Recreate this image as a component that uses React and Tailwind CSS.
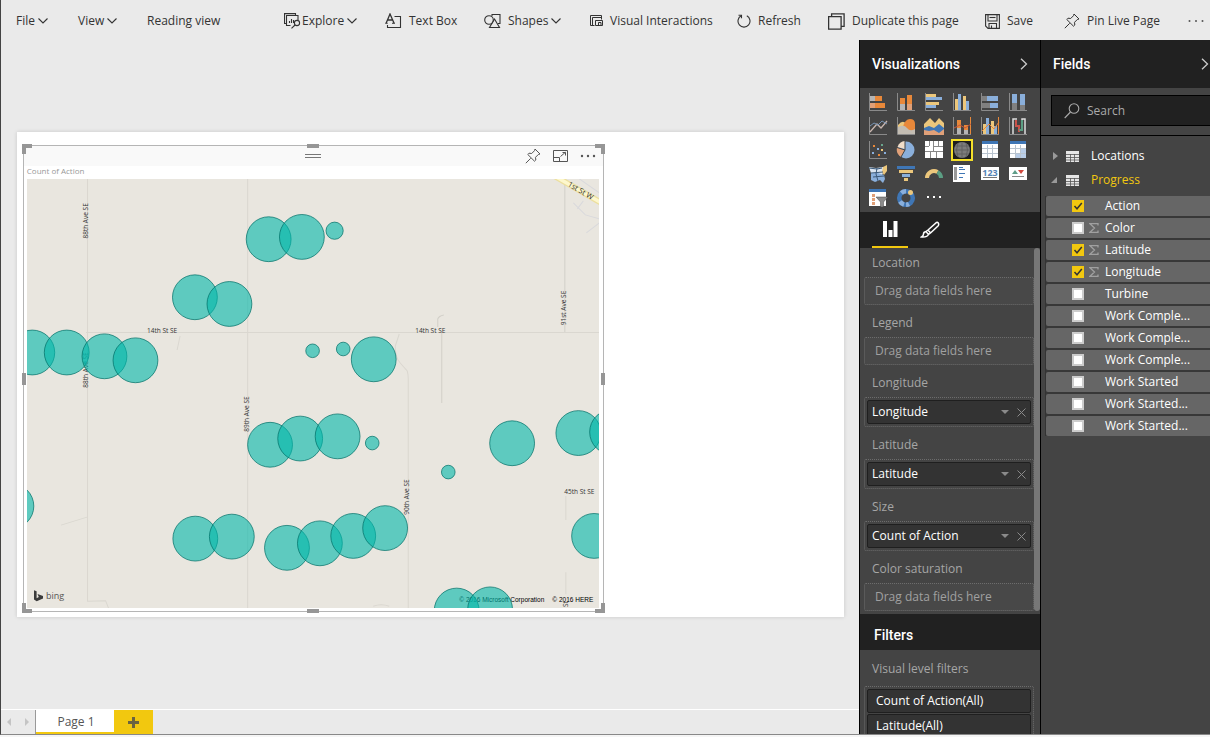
import React, { useState } from "react";

const strokeProps = { fill: "none", stroke: "currentColor", strokeWidth: 1.1 };

function Chevron() {
  return (
    <svg className="h-2 w-3 shrink-0" viewBox="0 0 12 8" {...strokeProps}>
      <path d="M1.500 1.500 6 6l4.500-4.500" />
    </svg>
  );
}

function PinIcon({ className }) {
  return (
    <svg className={className} viewBox="0 0 16 16" {...strokeProps} strokeWidth="1">
      <path d="M.8 15.200 5.700 10.300M10 1l5 5-1.700.5-2.800 2.800.3 2.700-1.300 1.200-6.700-6.700L4 5.200l2.700.3 2.800-2.800Z" />
    </svg>
  );
}

const ExploreIcon = () => (
  <svg className="h-4 w-[17px] shrink-0" viewBox="0 0 17 16" {...strokeProps}>
    <path d="M2.500 10.500h-2V.6h11v1.500M6.500 12.500h-4v-10h11.500v4.500" />
    <path d="M5.500 10V8M7.500 10V6M9.500 10V7" />
    <circle cx="13" cy="10" r="2.600" />
    <path d="m11 12-3.500 3.400" />
  </svg>
);

const TextBoxIcon = () => (
  <svg className="h-4 w-[17px] shrink-0" viewBox="0 0 17 16" {...strokeProps}>
    <path d="M9.500 3.500h6v11h-13V12" />
    <path d="M1.200 10 5 1l4 9M2.500 7h5" strokeWidth="1.300" />
    <path d="M.2 10.200h2.500M7 10.200h3" />
  </svg>
);

const ShapesIcon = () => (
  <svg className="h-4 w-[17px] shrink-0" viewBox="0 0 17 16" {...strokeProps}>
    <circle cx="5" cy="7" r="4.300" />
    <path d="M8 3V1.500h8v9h-2" />
    <path d="m10.500 6 5 8.500h-10Z" />
  </svg>
);

const InteractionsIcon = () => (
  <svg className="h-3 w-[13px] shrink-0" viewBox="0 0 13 12" {...strokeProps} strokeWidth="1">
    <path d="M11.500 4.500v-4H.5v10h4M2.500 10.500v-8h9" />
    <path d="M5.500 5.500h7v5h-7zM8.500 7.500h2.500v3H8.500z" />
  </svg>
);

const RefreshIcon = () => (
  <svg className="h-[14px] w-[14px] shrink-0" viewBox="0 0 14 14" {...strokeProps}>
    <path d="M4.200 1.800a6 6 0 1 0 5.600 0" />
    <path d="M1.500 1.300h3v3" />
  </svg>
);

const DuplicateIcon = () => (
  <svg className="h-[17px] w-[17px] shrink-0" viewBox="0 0 17 17" {...strokeProps}>
    <path d="M.6 3.600h12.500v12.500H.6zM3.600 3.500V.8h12.500v12.600h-3" strokeWidth="1.300" />
  </svg>
);

const SaveIcon = () => (
  <svg className="h-[15px] w-[15px] shrink-0" viewBox="0 0 15 15" {...strokeProps}>
    <path d="M.6.6h13.800v13.800H3L.6 12ZM3 .6v6.400h9V.6M4 14V9.500h7.500V14M6.500 11.500V14" />
    <path d="M4.500 3.500h6" />
  </svg>
);

const toolbar = [
  { label: "File", width: "w-[62px]", chevron: true },
  { label: "View", width: "w-[69px]", chevron: true },
  { label: "Reading view", width: "w-[137px]" },
  { label: "Explore", width: "w-[101px]", gap: "gap-px", icon: <ExploreIcon />, chevron: true },
  { label: "Text Box", width: "w-[99px]", gap: "gap-[7px]", icon: <TextBoxIcon /> },
  { label: "Shapes", width: "w-[106px]", gap: "gap-[7px]", icon: <ShapesIcon />, chevron: true },
  { label: "Visual Interactions", width: "w-[147px]", gap: "gap-[7px]", icon: <InteractionsIcon /> },
  { label: "Refresh", width: "w-[91px]", gap: "gap-[7px]", icon: <RefreshIcon /> },
  { label: "Duplicate this page", width: "w-[157px]", gap: "gap-[7px]", icon: <DuplicateIcon /> },
  { label: "Save", width: "w-[79px]", gap: "gap-[7px]", icon: <SaveIcon /> },
  { label: "Pin Live Page", width: "w-[124px]", gap: "gap-[7px]", icon: <PinIcon className="h-4 w-4 shrink-0" /> },
];

function Toolbar() {
  return (
    <header className="flex h-10 shrink-0 items-center overflow-hidden pl-[15px] pt-[2px] text-[12px] text-[#333]">
      {toolbar.map((t) => (
        <div key={t.label} className={"shrink-0 " + t.width}>
          <button className={"flex h-5 items-center whitespace-nowrap " + (t.gap || "")}>
            {t.icon}
            <span className="flex items-center gap-[2px]">
              {t.label}
              {t.chevron && <Chevron />}
            </span>
          </button>
        </div>
      ))}
      <button aria-label="More options" className="shrink-0">
        <svg className="block h-1 w-4" viewBox="0 0 16 4" fill="#555">
          <circle cx="1.500" cy="2" r="1" />
          <circle cx="8" cy="2" r="1" />
          <circle cx="14.500" cy="2" r="1" />
        </svg>
      </button>
    </header>
  );
}

const bubbles = [
  [241.5, 60.3, 22.4], [274.7, 58, 22.4], [307.4, 51.8, 8.6],
  [167.8, 118.3, 22.4], [202.3, 125, 22.4],
  [5.3, 173.5, 22.4], [39.7, 173.5, 22.4], [77.4, 177.3, 22.4], [108.4, 181.3, 22.4],
  [285.4, 171.8, 6.8], [316, 170, 6.8], [346.5, 180.3, 22.4],
  [242.9, 265.7, 22.4], [273, 259.5, 22.4], [310.4, 257.3, 22.4], [345, 264, 6.8],
  [484.8, 264.2, 22.4], [551, 254, 22.4], [584.7, 253, 22.4], [421, 293, 6.8],
  [-15.6, 327, 22.4], [168.2, 359.5, 22.4], [204.7, 357.5, 22.4],
  [259.8, 368.7, 22.4], [292.7, 364.2, 22.4], [326, 356.8, 22.4], [357.9, 349, 22.4],
  [566.7, 356.8, 22.4], [429.4, 431.4, 22.4], [462.8, 430.2, 22.4],
];

const roads = [
  { name: "88th Ave SE", x: 61, y: 42, turn: -90 },
  { name: "88th Ave SE", x: 61, y: 191, turn: -90 },
  { name: "89th Ave SE", x: 222, y: 235, turn: -90 },
  { name: "90th Ave SE", x: 382, y: 318, turn: -90 },
  { name: "91st Ave SE", x: 539, y: 129, turn: -90 },
  { name: "14th St SE", x: 135, y: 154, turn: 0 },
  { name: "14th St SE", x: 403, y: 154, turn: 0 },
  { name: "45th St SE", x: 552, y: 315, turn: 0 },
  { name: "St", x: 541, y: 425, turn: -90 },
];

function BubbleMap() {
  return (
    <svg
      className="block min-h-0 w-full flex-1 bg-[#e9e6df]"
      viewBox="0 0 572 429"
      preserveAspectRatio="xMidYMid slice"
      role="img"
      aria-label="Count of Action by Longitude and Latitude"
    >
      <g fill="none" stroke="#dad7d0" strokeWidth="1">
        <path d="M60.500 0v422l18-.5 3 7.500M220.500 0v429M59 153.500h513" />
        <path d="M537.500 0v153M414.500 153v71M410.500 148v-8q1-3 6-4" stroke="#d2cfc8" />
        <path d="m372 155-4 12q0 12 5 17l7 8q1 3 1 8v229" />
        <path d="M153 157l-3 14M34 346l26-8M538.500 317v24M538.500 393v22M346 427q8-3 16 0" />
        <path d="M552 0l20 14M546 24l12 12 14 4M572 44l-13 10M556 22l-6 8" stroke="#d9d9dc" />
      </g>
      <path d="M527-3 575 24.500" stroke="#ecdf9e" strokeWidth="6" />
      <path d="M527-3 575 24.500" stroke="#fdf7cd" strokeWidth="3.500" />
      <g fill="#333" fontSize="6.500" textAnchor="middle">
        {roads.map((r, i) => (
          <text key={i} transform={`translate(${r.x} ${r.y}) rotate(${r.turn})`}>
            {r.name}
          </text>
        ))}
        <text transform="translate(552 14) rotate(30)" fontSize="7.500">1st St W</text>
      </g>
      <g fontSize="6.500" fill="#000" className="font-['Liberation_Sans',sans-serif]">
        <text x="432" y="423">© 2016 Microsoft Corporation</text>
        <text x="525" y="423">© 2016 HERE</text>
      </g>
      <g fill="#01b8aa" fillOpacity="0.600" stroke="#016f67" strokeOpacity="0.800" strokeWidth="0.900">
        {bubbles.map(([x, y, r], i) => (
          <circle key={i} cx={x} cy={y} r={r} />
        ))}
      </g>
      <path fill="#3b3b3b" d="m7 411 2.600 1v7l2.200-1.200-1.300-2.900 5.500 2v2.500L9.700 422 7 420.300Z" />
      <text x="19" y="420" fontSize="9" fill="#555">bing</text>
    </svg>
  );
}

const handles = [
  "-left-[2px] -top-[2px] h-[10px] w-[10px] border-l-4 border-t-4",
  "-right-[2px] -top-[2px] h-[10px] w-[10px] border-r-4 border-t-4",
  "-left-[2px] -bottom-[2px] h-[10px] w-[10px] border-b-4 border-l-4",
  "-right-[2px] -bottom-[2px] h-[10px] w-[10px] border-b-4 border-r-4",
  "-top-[2px] left-1/2 w-3 -translate-x-1/2 border-t-4",
  "-bottom-[2px] left-1/2 w-3 -translate-x-1/2 border-t-4",
  "-left-[2px] top-1/2 h-3 -translate-y-1/2 border-l-4",
  "-right-[2px] top-1/2 h-3 -translate-y-1/2 border-l-4",
];

function MapVisual() {
  return (
    <section className="absolute left-[0.7%] top-[2.7%] flex h-[96.3%] w-[70.3%] flex-col border border-[#b5b5b5]">
      {handles.map((h) => (
        <span key={h} className={"absolute border-[#969696] " + h} />
      ))}
      <div className="grid h-5 shrink-0 grid-cols-[1fr_auto_1fr] items-center bg-[#f9f9f9] text-[#555]">
        <span />
        <span className="h-1 w-4 border-y border-[#777]" />
        <div className="flex items-center justify-end gap-3 pr-[7px]">
          <button aria-label="Pin visual"><PinIcon className="block h-4 w-4" /></button>
          <button aria-label="Focus mode">
            <svg className="block h-3 w-[15px]" viewBox="0 0 15 12" {...strokeProps} strokeWidth="1">
              <path d="M.5.5h14v11H.5zM.5 7.500h6v4M7.500 6.500l5-4.300M9.500 2.500h3v3" />
            </svg>
          </button>
          <button aria-label="More options">
            <svg className="block h-1 w-4" viewBox="0 0 16 4" fill="#555">
              <circle cx="2" cy="2" r="1.200" />
              <circle cx="8" cy="2" r="1.200" />
              <circle cx="14" cy="2" r="1.200" />
            </svg>
          </button>
        </div>
      </div>
      <div className="flex min-h-0 flex-1 flex-col pb-[3px] pl-[3px] pr-1">
        <h2 className="h-[13px] shrink-0 text-[8px] leading-[9px] text-[#999]">Count of Action</h2>
        <BubbleMap />
      </div>
    </section>
  );
}

function PageTabs() {
  return (
    <nav className="flex h-[25px] shrink-0 border-t border-white text-[12px] text-[#555]">
      <div className="flex w-[35px] items-center justify-between border-r border-[#999] px-[6px]">
        <button aria-label="Previous page">
          <svg className="block h-2 w-1" viewBox="0 0 4 8" fill="#c4c4c4"><path d="M4 0v8L0 4Z" /></svg>
        </button>
        <button aria-label="Next page">
          <svg className="block h-2 w-1" viewBox="0 0 4 8" fill="#c4c4c4"><path d="M0 0v8l4-4Z" /></svg>
        </button>
      </div>
      <button className="w-[78px] border-b-2 border-[#f2c80f] bg-white pl-[2px] pt-[2px]">Page 1</button>
      <button aria-label="Add page" className="flex w-[39px] items-center justify-center bg-[#f2c80f]">
        <svg className="h-[11px] w-[11px]" viewBox="0 0 11 11" fill="#6b6340">
          <path d="M4 0h3v4h4v3H7v4H4V7H0V4h4Z" />
        </svg>
      </button>
    </nav>
  );
}

const O = "#e8883a", B = "#8aafdb", D = "#3f76b5", Y = "#ecc77c", G = "#808080", L = "#b5b5b5", P = "#e0a078";
const Axis = () => <path d="M1.500 1v17.500H19" fill="none" stroke="#8a8a8a" />;
const Rects = ({ items }) => items.map(([x, y, w, h, c], i) => <rect key={i} x={x} y={y} width={w} height={h} fill={c} />);

const visuals = [
  ["Stacked bar chart", <><Axis /><Rects items={[[2, 4, 5, 5, L], [7, 4, 7, 5, O], [2, 11, 5, 5, P], [7, 11, 10, 5, O]]} /></>],
  ["Stacked column chart", <><Axis /><Rects items={[[4, 6, 5, 6, O], [4, 12, 5, 6, L], [11, 3, 5, 9, O], [11, 12, 5, 6, P]]} /></>],
  ["Clustered bar chart", <><Axis /><Rects items={[[2, 2, 10, 3, Y], [2, 5, 16, 3, B], [2, 10, 13, 3, Y], [2, 13, 10, 3, B]]} /></>],
  ["Clustered column chart", <><Axis /><Rects items={[[3, 7, 3, 11, Y], [6, 2, 3, 16, B], [11, 4, 3, 14, Y], [14, 9, 3, 9, B]]} /></>],
  ["100% stacked bar chart", <><Axis /><Rects items={[[2, 4, 5, 5, G], [7, 4, 11, 5, B], [2, 11, 8, 5, G], [10, 11, 8, 5, B]]} /></>],
  ["100% stacked column chart", <><Axis /><Rects items={[[4, 2, 5, 9, B], [4, 11, 5, 7, G], [12, 2, 5, 11, B], [12, 13, 5, 5, G]]} /></>],
  ["Line chart", <><Axis /><path d="m2 16 7-8 4 4 6-7" fill="none" stroke="#c9b7b0" strokeWidth="1.300" /><path d="m2 10 4-3 4 2 4-4 5 3" fill="none" stroke="#7793b3" /></>],
  ["Area chart", <><Axis /><path d="M2 9q5-6 8-1v10H2Z" fill={Y} /><path d="M7 11Q9 3 14 3t5 5v10H7Z" fill={O} /><path d="M2 11q6-3 9 1t8 1v5H2Z" fill="#c3bdb3" /></>],
  ["Stacked area chart", <><path d="m0 8 6-6 5 5 4-5 5 5v11H0Z" fill={Y} /><path d="m0 12 5-2 5 2 5-4 5 4v7H0Z" fill={D} /><path d="m0 14 5 1 5-1 5 3 5-4v6H0Z" fill={P} /></>],
  ["Line and stacked column chart", <><Axis /><Rects items={[[5, 4, 4, 8, O], [5, 12, 4, 6, L], [12, 9, 4, 5, O], [12, 14, 4, 4, L], [18, 1, 1, 17, O]]} /><path d="m2 12 6-3 5 3 6-4" fill="none" stroke="#c3543c" /></>],
  ["Line and clustered column chart", <><Axis /><Rects items={[[3, 8, 3, 10, Y], [6, 2, 3, 16, B], [11, 5, 3, 13, Y], [14, 10, 3, 8, B], [18, 1, 1, 17, O]]} /><path d="m2 15 7-7 5 5 5-7" fill="none" stroke={O} /></>],
  ["Waterfall chart", <><Axis /><path d="M5 18V3h4M14 14V3h3v15" fill="none" stroke="#ddd" strokeWidth="1.500" /><path d="M8 4v6h3v6" fill="none" stroke="#c8534a" strokeWidth="2" /><path d="M14 4v10h-3" fill="none" stroke="#5b9e83" strokeWidth="2" /></>],
  ["Scatter chart", <><Axis /><Rects items={[[5, 5, 2, 2, O], [13, 4, 2, 2, "#6aa58c"], [9, 8, 2, 2, B], [4, 12, 2, 2, B], [13, 9, 2, 2, Y], [10, 14, 2, 2, O], [16, 12, 2, 2, B]]} /></>],
  ["Pie chart", <><circle cx="10" cy="10" r="8.500" fill={B} /><path d="M9 9V1a9 9 0 0 0-7.500 6Z" fill="#f0ddc9" /><path d="M9 10 1 7.500A9 9 0 0 0 5 17Z" fill={P} /><path d="M9 0v10L1 7.500M9 10l-4 7" fill="none" stroke="#444" /></>],
  ["Treemap", <><rect x="1" y="1" width="18" height="17" fill="#fff" /><path d="M1 11.500h18M9.500 1v10M6.500 12v6M12.500 12v6M10 6.500h9M14.500 1v5M5.500 1v5M1 6.500h4" stroke="#888" fill="none" /></>],
  ["Map", <><rect width="20" height="20" fill="#1d1d1d" /><circle cx="10" cy="10" r="8" fill="#7c7c7c" /><path d="M3 6h14M2 10h16M3 14h14M10 2v16M6 3q-3 7 0 14M14 3q3 7 0 14" fill="none" stroke="#606060" /></>],
  ["Table", <><rect x="2" y="1" width="16" height="17" fill="#fff" /><rect x="2" y="1" width="16" height="3" fill={D} /><path d="M2 8.500h16M2 13.500h16M7.500 5v13M12.500 5v13" stroke="#b9c4cf" fill="none" /></>],
  ["Matrix", <><rect x="2" y="1" width="16" height="17" fill="#fff" /><rect x="2" y="1" width="16" height="3" fill={D} /><path d="M13 9h5v9h-5zM8 14h5v4H8z" fill="#b8cde8" /><path d="M2 8.500h16M2 13.500h16M7.500 5v13M12.500 5v13" stroke="#b9c4cf" fill="none" /></>],
  ["Filled map", <><path d="m1 3 7 1 7-1v6l-2 4-9-1Z" fill="#dbe5f0" /><path d="m3 9 7 0 6 2 1 4-2 4-3-3-5 2-4-2Z" fill={B} /><path d="m15 3 4-2v6l-3 4-2-3Z" fill={Y} /><path d="m1 4 8 1 5-1M3 9l12-1M5 13l11-1M9 4l-1 6 2 7" fill="none" stroke="#3a5878" /></>],
  ["Funnel", <Rects items={[[1, 2, 18, 3, D], [3, 6, 14, 3, Y], [6, 10, 8, 3, B], [8, 14, 4, 3, Y]]} />],
  ["Gauge", <><path d="M3 14a7 7 0 0 1 10.500-6" fill="none" stroke={Y} strokeWidth="4" /><path d="M13.500 8a7 7 0 0 1 3.500 6" fill="none" stroke="#5b9e83" strokeWidth="4" /></>],
  ["Multi-row card", <><rect x="1" y="1" width="17" height="17" fill="#fff" /><rect x="2" y="3" width="3" height="13" fill="#999" /><path d="M7 3.500h4M7 5.500h6M7 9.500h6M7 13.500h4" stroke={D} /></>],
  ["Card", <><rect x="1" y="3" width="18" height="13" fill="#fff" /><text x="10" y="11.500" textAnchor="middle" fontSize="9" fontWeight="700" fill="#5583b5">123</text><path d="M3 13.500h14" stroke="#777" /></>],
  ["KPI", <><rect x="1" y="3" width="18" height="13" fill="#fff" /><path d="m4 10 3-4 3 4Z" fill="#5f9d88" /><path d="M10 6h6l-3 4Z" fill="#d2493f" /><path d="M4 12.500h12" stroke="#888" /></>],
  ["Slicer", <><rect x="1" y="1" width="17" height="17" fill="#fff" /><rect x="1" y="1" width="17" height="3" fill={D} /><Rects items={[[4, 6, 3, 3, P], [4, 10, 3, 3, P], [4, 14, 3, 3, P]]} /><path d="M8 9h12l-4.500 5v5h-3v-5Z" fill="#8b8b8b" stroke="#444" strokeWidth=".5" /></>],
  ["Donut chart", <><circle cx="10" cy="10" r="6.800" fill="none" stroke={D} strokeWidth="4.500" /><path d="M10 3.200a6.800 6.800 0 0 0-5.900 3.400M4 13.500a6.800 6.800 0 0 0 9 2.500" fill="none" stroke={B} strokeWidth="4.500" strokeDasharray="5 2" /><circle cx="14.500" cy="4.500" r="2.500" fill={Y} /></>],
  ["More visuals", <Rects items={[[3, 8, 2, 2, "#fff"], [9, 8, 2, 2, "#fff"], [15, 8, 2, 2, "#fff"]]} />],
];

function VisualPicker() {
  return (
    <div className="grid shrink-0 grid-cols-[repeat(6,20px)] gap-x-2 gap-y-1 px-2 py-1">
      {visuals.map(([name, art]) => (
        <button
          key={name}
          aria-label={name}
          className={name === "Map" ? "h-5 w-5 outline-2 -outline-offset-1 outline-[#f5e02a]" : "h-5 w-5"}
        >
          <svg className="block h-5 w-5" viewBox="0 0 20 20">{art}</svg>
        </button>
      ))}
    </div>
  );
}

function PaneHeader({ title, className }) {
  return (
    <div className={"flex h-12 shrink-0 items-center justify-between bg-[#212121] pl-3 " + className}>
      <h2 className="font-['Roboto',sans-serif] text-[14px] font-medium text-white">{title}</h2>
      <button aria-label={"Collapse " + title} className="text-[#ccc]">
        <svg className="block h-3 w-2" viewBox="0 0 8 12" fill="none" stroke="currentColor" strokeWidth="1.300">
          <path d="m1 .7 5.500 5.300L1 11.300" />
        </svg>
      </button>
    </div>
  );
}

const wells = [
  { label: "Location" },
  { label: "Legend" },
  { label: "Longitude", field: "Longitude" },
  { label: "Latitude", field: "Latitude" },
  { label: "Size", field: "Count of Action" },
  { label: "Color saturation" },
];

function Well({ label, field }) {
  return (
    <div className="mb-1">
      <h3 className="pl-2 leading-7 text-[#a6a6a6]">{label}</h3>
      {field ? (
        <div className="rounded-[2px] border border-dotted border-[#6c6c6c] p-[2px]">
          <div className="flex h-6 items-center rounded-[2px] border border-[#1f1f1f] bg-[#333] pl-1 pr-1 text-white">
            <span className="flex-1">{field}</span>
            <button aria-label={field + " options"} className="mr-2">
              <svg className="block h-1 w-2" viewBox="0 0 8 4" fill="#8a8a8a"><path d="M0 0h8L4 4Z" /></svg>
            </button>
            <button aria-label={"Remove " + field}>
              <svg className="block h-[9px] w-[9px]" viewBox="0 0 9 9" stroke="#8a8a8a"><path d="m.5.5 8 8m0-8-8 8" /></svg>
            </button>
          </div>
        </div>
      ) : (
        <div className="flex h-7 items-center rounded-[2px] border border-dotted border-[#6c6c6c] bg-[#484848] pl-[10px] text-[#a0a0a0]">
          Drag data fields here
        </div>
      )}
    </div>
  );
}

function VisualizationsPane() {
  return (
    <aside className="flex w-[181px] shrink-0 flex-col overflow-hidden border-l border-black bg-[#444] text-[12px]">
      <PaneHeader title="Visualizations" className="pr-3" />
      <VisualPicker />
      <div className="flex h-9 shrink-0 bg-[#212121] pl-3 text-white">
        <button aria-label="Fields" className="flex w-9 items-center justify-center border-b-2 border-[#f2c80f]">
          <svg className="h-4 w-[15px]" viewBox="0 0 15 16" fill="currentColor">
            <path d="M0 0h4v16H0zM5.500 9h4v7h-4zM10.500 0h4v16h-4z" />
          </svg>
        </button>
        <button aria-label="Format" className="flex w-11 items-center justify-center">
          <svg className="h-[18px] w-[20px]" viewBox="0 0 20 18" fill="none" stroke="currentColor" strokeWidth="1.500">
            <path d="M8 9 16.500 1.500q1.500-.5 2 1T18 5l-7.500 7M8 9l2.500 3M6 10.500l2.500 3q-1.500 3-7 2.500 2-1 2-3t2.500-2.500ZM8 9l-2 1.500M10.500 12l-2 1.500" />
          </svg>
        </button>
      </div>
      <div className="flex shrink-0">
        <div className="flex-1 pl-1 pt-px">
          {wells.map((w) => <Well key={w.label} {...w} />)}
        </div>
        <div className="mb-1 w-[6px] rounded-[3px] bg-[#777]" />
      </div>
      <h2 className="-mt-px flex h-9 shrink-0 items-center bg-[#212121] pl-[14px] pt-[6px] font-['Roboto',sans-serif] text-[14px] font-medium text-white">
        Filters
      </h2>
      <div className="pl-1 pr-[6px]">
        <h3 className="h-9 pl-2 leading-[38px] text-[#a6a6a6]">Visual level filters</h3>
        <div className="flex flex-col gap-px rounded-[2px] border border-dotted border-[#6c6c6c] p-[2px] text-white">
          {["Count of Action(All)", "Latitude(All)"].map((f) => (
            <button key={f} className="h-6 shrink-0 rounded-[2px] border border-[#1f1f1f] bg-[#333] pl-2 text-left">
              {f}
            </button>
          ))}
        </div>
      </div>
    </aside>
  );
}

const fields = [
  { name: "Action", on: true },
  { name: "Color", sum: true },
  { name: "Latitude", sum: true, on: true },
  { name: "Longitude", sum: true, on: true },
  { name: "Turbine" },
  { name: "Work Comple..." },
  { name: "Work Comple..." },
  { name: "Work Comple..." },
  { name: "Work Started" },
  { name: "Work Started..." },
  { name: "Work Started..." },
];

function FieldRow({ name, sum, on }) {
  const [checked, setChecked] = useState(Boolean(on));
  return (
    <li>
      <label className="flex h-5 items-center rounded-l-[2px] bg-[#666] pl-[26px]">
        <span className="grid h-3 w-3">
          <input
            type="checkbox"
            checked={checked}
            onChange={() => setChecked(!checked)}
            className="col-start-1 row-start-1 h-3 w-3 appearance-none border-2 border-[#ccc] bg-white checked:border-[#f2c80f] checked:bg-[#f2c80f]"
          />
          {checked && (
            <svg className="pointer-events-none col-start-1 row-start-1 h-3 w-3" viewBox="0 0 12 12" fill="none" stroke="#333" strokeWidth="1.500">
              <path d="m2.500 6 2.500 2.800L9.800 3" />
            </svg>
          )}
        </span>
        <span className="flex w-[21px] pl-[5px]">
          {sum && (
            <svg className="h-[10px] w-[10px]" viewBox="0 0 10 10" fill="none" stroke="#a0a0a0" strokeWidth="1.300">
              <path d="M9 2.500V.7H1L5.500 5 1 9.300h8V7.500" />
            </svg>
          )}
        </span>
        {name}
      </label>
    </li>
  );
}

const TableIcon = () => (
  <svg className="h-[11px] w-[13px]" viewBox="0 0 13 11" fill="#e6e6e6">
    <path d="M0 0h13v11H0z" />
    <path d="M0 3.500h13M0 6.500h13M0 9h13M4.500 3v8M8.500 3v8" fill="none" stroke="#555" strokeWidth=".8" />
  </svg>
);

function FieldsPane() {
  return (
    <aside className="flex w-[170px] shrink-0 flex-col overflow-hidden border-l border-black bg-[#444] text-[12px] text-white">
      <PaneHeader title="Fields" className="pr-px" />
      <div className="border-b border-black pb-[9px] pl-[10px] pt-[7px]">
        <label className="flex h-[31px] items-center gap-[7px] border border-r-0 border-black bg-[#212121] pl-3 pt-px text-[#aaa]">
          <svg className="h-4 w-4 shrink-0" viewBox="0 0 16 16" {...strokeProps}>
            <circle cx="10" cy="5.500" r="4.800" />
            <path d="M6.500 9 .7 15" />
          </svg>
          <input aria-label="Search" placeholder="Search" className="w-full min-w-0 bg-transparent placeholder-[#aaa] outline-none" />
        </label>
      </div>
      <div className="flex flex-col pt-2">
        <button className="flex h-6 items-center pl-3">
          <svg className="h-2 w-[5px]" viewBox="0 0 5 8" fill="#999"><path d="M0 0v8l5-4Z" /></svg>
          <span className="pl-2 pr-3"><TableIcon /></span>
          Locations
        </button>
        <button className="flex h-6 items-center pl-[10px] text-[#f2c80f]">
          <svg className="h-[6px] w-[6px]" viewBox="0 0 6 6" fill="#999"><path d="M6 0v6H0Z" /></svg>
          <span className="pl-[9px] pr-3"><TableIcon /></span>
          Progress
        </button>
      </div>
      <ul className="ml-1 mt-1 flex flex-col gap-[2px] border-l border-[#333] bg-[#383838]">
        {fields.map((f, i) => <FieldRow key={i} {...f} />)}
      </ul>
    </aside>
  );
}

export default function App() {
  return (
    <div className="flex h-screen flex-col overflow-hidden bg-[#f5f5f5] pb-[2px] font-['Open_Sans','Noto_Sans',sans-serif]">
      <div className="flex min-h-0 flex-1 flex-col border-b border-l border-b-[#888] border-l-[#444] bg-[#eaeaea]">
        <Toolbar />
        <div className="flex min-h-0 flex-1">
          <main className="flex min-w-0 flex-1 flex-col">
            <div className="flex min-h-0 flex-1 items-center pl-4 pr-[15px]">
              <div className="relative aspect-[827/485] w-full bg-white shadow-[0_0_4px_rgba(0,0,0,0.15)]">
                <MapVisual />
              </div>
            </div>
            <PageTabs />
          </main>
          <VisualizationsPane />
          <FieldsPane />
        </div>
      </div>
    </div>
  );
}
